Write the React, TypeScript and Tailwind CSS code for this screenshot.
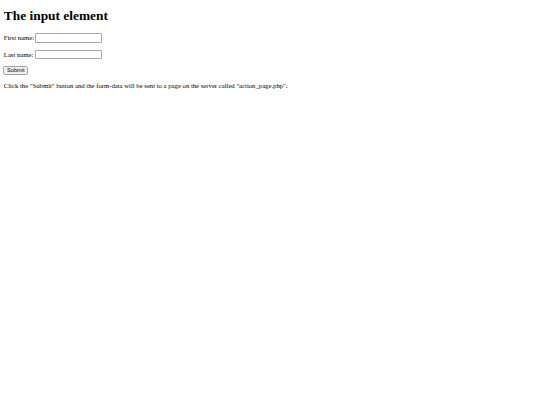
export default function App() {
  return (
    <div
      className="w-[540px] h-[405px] bg-white text-black pl-[3.3px] pt-[8.4px] flex flex-col items-start"
      style={{ fontFamily: '"Liberation Serif", "Times New Roman", serif' }}
    >
      <h1 className="text-[13.4px] leading-[15.4px] font-bold m-0 pl-[0.5px]">The input element</h1>
      <form className="flex flex-col items-start" onSubmit={(e) => e.preventDefault()}>
        <div className="mt-[9.7px] h-[9.5px] flex items-center gap-[1.3px] text-[6.7px] pl-[0.5px]">
          <label htmlFor="fname">First name:</label>
          <input
            id="fname"
            type="text"
            className="w-[67px] h-[9.5px] border border-[#a8a8a8] rounded-[1px] bg-white outline-none"
          />
        </div>
        <div className="mt-[7px] h-[9.5px] flex items-center gap-[1.3px] text-[6.7px] pl-[0.5px]">
          <label htmlFor="lname">Last name:</label>
          <input
            id="lname"
            type="text"
            className="w-[67px] h-[9.5px] border border-[#a8a8a8] rounded-[1px] bg-white outline-none"
          />
        </div>
        <button
          type="submit"
          className="mt-[7px] h-[8.8px] w-[25px] flex items-center justify-center border border-[#a0a0a0] rounded-[1.5px] bg-[#efefef] text-[5.6px] leading-none"
          style={{ fontFamily: '"Liberation Sans", Arial, sans-serif' }}
        >
          Submit
        </button>
      </form>
      <p className="mt-[7px] text-[6.7px] leading-[7.7px] pl-[0.5px]">
        Click the "Submit" button and the form-data will be sent to a page on the server called "action_page.php".
      </p>
    </div>
  );
}
